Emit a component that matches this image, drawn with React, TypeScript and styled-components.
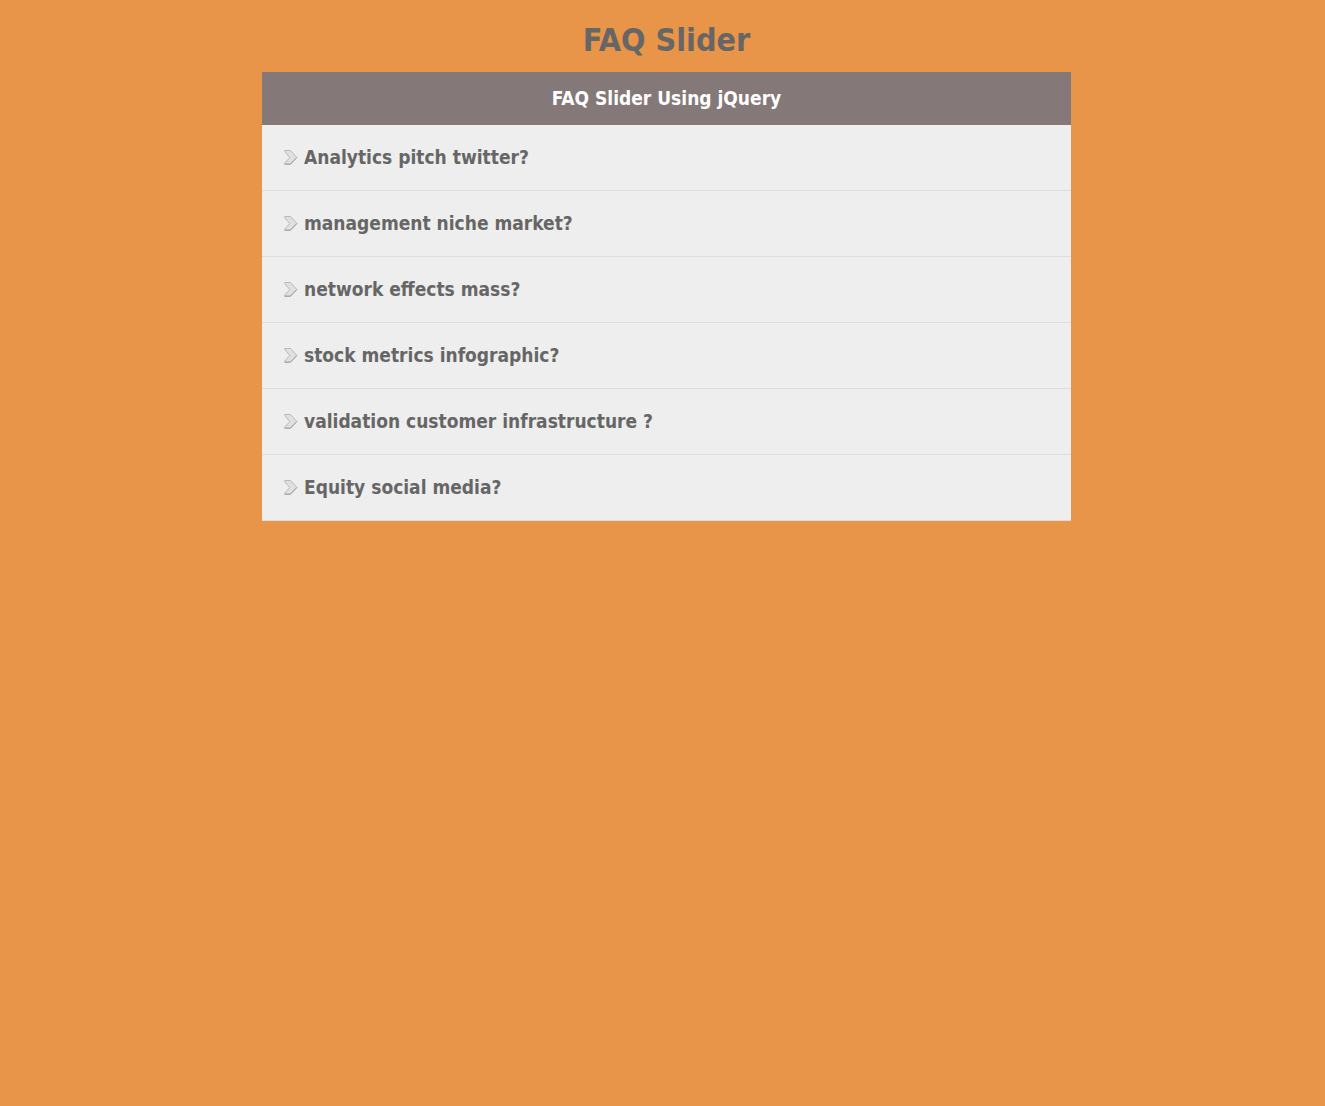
import React, { useState } from "react";
import styled, { createGlobalStyle } from "styled-components";

const GlobalStyle = createGlobalStyle`
  body {
    margin: 0;
    background: #e89549;
    color: #666;
    font-family: Tahoma, "DejaVu Sans Condensed", "DejaVu Sans", sans-serif;
  }
`;

const Page = styled.main`
  display: flex;
  flex-direction: column;
  align-items: center;
  padding: 20px 0 20px 8px;
`;

const Title = styled.h1`
  margin: 0 0 12px;
  font-size: 32px;
  line-height: 40px;
  font-weight: 700;
`;

const Panel = styled.section`
  width: 100%;
  max-width: 809px;
  background: #eee;
`;

const PanelHeading = styled.h2`
  margin: 0;
  padding: 14px 20px;
  background: #847978;
  color: #fff;
  font-size: 19px;
  line-height: 25px;
  font-weight: 700;
  text-align: center;
`;

const QuestionList = styled.ul`
  margin: 0;
  padding: 0;
  list-style: none;
`;

const QuestionItem = styled.li`
  border-bottom: 1px solid #ddd;
`;

const QuestionButton = styled.button<{ $active: boolean }>`
  display: flex;
  align-items: center;
  gap: 6px;
  width: 100%;
  padding: 20px 22px;
  border: 0;
  background: ${(p) => (p.$active ? "#e4e4e4" : "transparent")};
  color: inherit;
  font: inherit;
  font-size: 19px;
  line-height: 25px;
  font-weight: 700;
  text-align: left;
  cursor: pointer;
`;

const ArrowIcon = styled.svg`
  flex: none;
  width: 14px;
  height: 15px;
`;

const questions = [
  "Analytics pitch twitter?",
  "management niche market?",
  "network effects mass?",
  "stock metrics infographic?",
  "validation customer infrastructure ?",
  "Equity social media?",
];

function Arrow() {
  return (
    <ArrowIcon viewBox="0 0 14 15" aria-hidden="true">
      <path d="M.7.5H6.5L12.8 7.5L6.5 14.2H.7V13.2L5.8 7.5L.7 1.5Z" fill="#e0e0e0" stroke="#b8b8b8" />
      <path d="M12.8 7.5L6.5 14.2H.7" fill="none" stroke="#a0a0a0" />
    </ArrowIcon>
  );
}

export default function App() {
  const [active, setActive] = useState<number | null>(null);
  return (
    <>
      <GlobalStyle />
      <Page>
        <Title>FAQ Slider</Title>
        <Panel>
          <PanelHeading>FAQ Slider Using jQuery</PanelHeading>
          <QuestionList>
            {questions.map((question, i) => (
              <QuestionItem key={question}>
                <QuestionButton
                  type="button"
                  $active={active === i}
                  aria-pressed={active === i}
                  onClick={() => setActive(active === i ? null : i)}
                >
                  <Arrow />
                  {question}
                </QuestionButton>
              </QuestionItem>
            ))}
          </QuestionList>
        </Panel>
      </Page>
    </>
  );
}
